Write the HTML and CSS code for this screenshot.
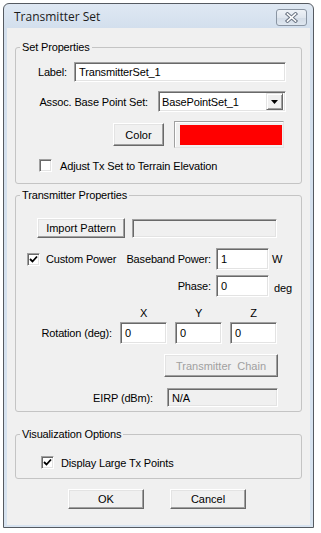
FILE: index.html
```html
<!DOCTYPE html>
<html lang="en">
<head>
    <meta charset="UTF-8">
    <title>Transmitter Set</title>
    <link rel="stylesheet" href="styles.css">
</head>
<body>
    <div class="window">
        <div class="titlebar">
            <span class="title">Transmitter Set</span>
            <div class="close-btn">
                <svg width="13" height="11" viewBox="0 0 13 11">
                    <path d="M2.5 2 L10.5 9 M10.5 2 L2.5 9" stroke="#6b7584" stroke-width="3.6" stroke-linecap="square"/>
                    <path d="M2.5 2 L10.5 9 M10.5 2 L2.5 9" stroke="#fff" stroke-width="1.6" stroke-linecap="square"/>
                </svg>
            </div>
        </div>

        <div class="client">
            <fieldset class="group">
                <legend>Set Properties</legend>
                <div class="set-body">
                    <div class="row row-end">
                        <span class="lbl">Label:</span>
                        <div class="edit edit-label">TransmitterSet_1</div>
                    </div>
                    <div class="row row-end row-assoc">
                        <span class="lbl lbl-assoc">Assoc. Base Point Set:</span>
                        <div class="edit combo">
                            <span>BasePointSet_1</span>
                            <div class="combo-btn">
                                <svg width="7" height="4" viewBox="0 0 7 4"><path d="M0 0 H7 L3.5 4 Z" fill="#000"/></svg>
                            </div>
                        </div>
                    </div>
                    <div class="row row-end row-color">
                        <button type="button" class="btn btn-color">Color</button>
                        <div class="swatch"><div class="swatch-fill"></div></div>
                    </div>
                    <div class="row check-row terrain-row">
                        <span class="checkbox"></span>
                        <span>Adjust Tx Set to Terrain Elevation</span>
                    </div>
                </div>
            </fieldset>

            <fieldset class="group group-tx">
                <legend>Transmitter Properties</legend>
                <div class="tx-body">
                    <div class="row import-row">
                        <button type="button" class="btn btn-import">Import Pattern</button>
                        <div class="edit edit-disabled edit-pattern"></div>
                    </div>
                    <div class="row power-row">
                        <div class="power-lead">
                            <div class="check-row">
                                <span class="checkbox checked">
                                    <svg width="9" height="9" viewBox="0 0 9 9"><path d="M1 4 L3.5 6.5 L8 1.5" stroke="#000" stroke-width="1.8" fill="none"/></svg>
                                </span>
                                <span class="custom-power">Custom Power</span>
                            </div>
                            <span>Baseband Power:</span>
                        </div>
                        <div class="edit edit-num">1</div>
                        <span class="unit">W</span>
                    </div>
                    <div class="row power-row phase-row">
                        <div class="power-lead lead-right">
                            <span>Phase:</span>
                        </div>
                        <div class="edit edit-num">0</div>
                        <span class="unit unit-deg">deg</span>
                    </div>
                    <div class="rotation">
                        <span></span>
                        <span class="axis">X</span>
                        <span class="axis">Y</span>
                        <span class="axis">Z</span>
                        <span class="rot-label">Rotation (deg):</span>
                        <div class="edit edit-rot">0</div>
                        <div class="edit edit-rot">0</div>
                        <div class="edit edit-rot">0</div>
                    </div>
                    <button type="button" class="btn btn-chain" disabled>Transmitter&nbsp; Chain</button>
                    <div class="row eirp-row">
                        <span class="eirp-label">EIRP (dBm):</span>
                        <div class="edit edit-disabled edit-eirp">N/A</div>
                    </div>
                </div>
            </fieldset>

            <fieldset class="group group-vis">
                <legend>Visualization Options</legend>
                <div class="vis-body">
                    <div class="check-row">
                        <span class="checkbox checked">
                            <svg width="9" height="9" viewBox="0 0 9 9"><path d="M1 4 L3.5 6.5 L8 1.5" stroke="#000" stroke-width="1.8" fill="none"/></svg>
                        </span>
                        <span>Display Large Tx Points</span>
                    </div>
                </div>
            </fieldset>

            <div class="actions">
                <button type="button" class="btn btn-action">OK</button>
                <button type="button" class="btn btn-action">Cancel</button>
            </div>
        </div>
    </div>
</body>
</html>
```

FILE: styles.css
```css
* {
    box-sizing: border-box;
}

body {
    margin: 0;
    background: #fff;
    font-family: "Liberation Sans", Arial, sans-serif;
    font-size: 11px;
    letter-spacing: -0.15px;
    color: #000;
}

.window {
    margin: 3px 0 0 3px;
    width: 311px;
    height: 525px;
    border: 1px solid #555a61;
    border-radius: 6px 6px 0 0;
    background: linear-gradient(#dfe8f3, #d3dfed 24px, #d7e3f0);
    padding: 0 3px 2px 3px;
    display: flex;
    flex-direction: column;
}

.titlebar {
    height: 24px;
    display: flex;
    align-items: flex-start;
}

.title {
    font-family: "Open Sans", "Liberation Sans", sans-serif;
    font-size: 12px;
    line-height: 16px;
    letter-spacing: 0;
    margin: 5px 0 0 7px;
    color: #1b1b1b;
}

.close-btn {
    margin: 5px 3px 0 auto;
    width: 31px;
    height: 17px;
    border: 1px solid #8a95a3;
    border-radius: 3px;
    background: linear-gradient(#eef2f7, #dfe6ee 50%, #d2dbe6 51%, #dfe7f0);
    display: flex;
    align-items: center;
    justify-content: center;
}

.client {
    flex: 1;
    background: #f0f0f0;
    padding: 13px 8px 0 8px;
}

.group {
    margin: 0;
    padding: 0;
    min-width: 0;
    border: 1px solid #c4c4c4;
    border-radius: 3px;
}

.group legend {
    padding: 0 2px;
    margin-left: 4px;
    line-height: 13px;
}

.row {
    display: flex;
    align-items: center;
}

.row-end {
    justify-content: flex-end;
}

.lbl {
    margin-right: 7px;
}

.lbl-assoc {
    margin-right: 10px;
}

/* sunken edit box */
.edit {
    background: #fff;
    border: 1px solid;
    border-color: #a0a0a0 #fff #fff #a0a0a0;
    box-shadow: inset 1px 1px #696969, inset -1px -1px #e3e3e3;
    padding: 0 4px;
    display: flex;
    align-items: center;
    white-space: nowrap;
}

.edit-disabled {
    background: #f0f0f0;
}

.btn {
    font: inherit;
    color: #000;
    background: #f0f0f0;
    border: 1px solid;
    border-color: #fff #696969 #696969 #fff;
    box-shadow: inset -1px -1px #a0a0a0, inset 1px 1px #e3e3e3;
    padding: 0;
    margin: 0;
}

.btn:disabled {
    color: #a0a0a0;
}

.checkbox {
    width: 13px;
    height: 13px;
    flex: none;
    background: #fff;
    border: 1px solid;
    border-color: #a0a0a0 #fff #fff #a0a0a0;
    box-shadow: inset 1px 1px #696969, inset -1px -1px #e3e3e3;
    display: flex;
    align-items: center;
    justify-content: center;
}

.check-row {
    display: flex;
    align-items: center;
}

/* Set Properties */
.set-body {
    padding: 8px 15px 11px 0;
}

.edit-label {
    width: 212px;
    height: 20px;
    padding-left: 4px;
}

.row-assoc {
    margin-top: 9px;
}

.combo {
    width: 128px;
    height: 21px;
    padding: 0 2px 0 3px;
    justify-content: space-between;
}

.combo-btn {
    width: 17px;
    height: 17px;
    background: #f0f0f0;
    border: 1px solid;
    border-color: #e3e3e3 #696969 #696969 #e3e3e3;
    box-shadow: inset 1px 1px #fff, inset -1px -1px #a0a0a0;
    display: flex;
    align-items: center;
    justify-content: center;
}

.row-color {
    margin-top: 9px;
    margin-right: 2px;
}

.btn-color {
    width: 51px;
    height: 23px;
    margin-right: 10px;
}

.swatch {
    width: 110px;
    height: 27px;
    border: 1px solid;
    border-color: #a0a0a0 #e3e3e3 #e3e3e3 #a0a0a0;
    box-shadow: inset 1px 1px #fff;
    padding: 3px 1px 2px 5px;
}

.swatch-fill {
    height: 100%;
    background: #ff0000;
}

.terrain-row {
    margin-top: 11px;
    padding-left: 23px;
}

.terrain-row .checkbox {
    margin-right: 8px;
}

/* Transmitter Properties */
.group-tx {
    margin-top: 5px;
}

.tx-body {
    padding: 16px 0 4px 0;
}

.import-row {
    margin-left: 21px;
}

.btn-import {
    width: 88px;
    height: 20px;
    margin-right: 7px;
}

.edit-pattern {
    width: 145px;
    height: 19px;
}

.power-row {
    margin-top: 10px;
}

.phase-row {
    margin-top: 5px;
}

.power-lead {
    width: 195px;
    padding-left: 11px;
    display: flex;
    align-items: center;
    justify-content: space-between;
}

.lead-right {
    justify-content: flex-end;
}

.power-lead .checkbox {
    margin-right: 6px;
}

.custom-power {
    margin-top: -1px;
}

.edit-num {
    width: 53px;
    height: 22px;
    margin-left: 5px;
}

.unit {
    margin-left: 3px;
}

.unit-deg {
    margin-left: 5px;
    margin-top: 4px;
}

.rotation {
    margin-top: 9px;
    display: grid;
    grid-template-columns: 96px 47px 47px 47px;
    grid-template-rows: 13px 22px;
    column-gap: 8px;
    row-gap: 3px;
    align-items: center;
}

.axis {
    text-align: center;
}

.rot-label {
    text-align: right;
    padding-right: 0;
}

.edit-rot {
    height: 22px;
}

.btn-chain {
    display: block;
    margin: 10px 0 0 148px;
    width: 114px;
    height: 23px;
}

.eirp-row {
    margin-top: 11px;
}

.eirp-label {
    width: 137px;
    text-align: right;
    margin-right: 14px;
}

.edit-eirp {
    width: 111px;
    height: 19px;
}

/* Visualization Options */
.group-vis {
    margin-top: 16px;
}

.vis-body {
    padding: 15px 0 9px 25px;
}

.vis-body .checkbox {
    margin-right: 7px;
}

.actions {
    margin: 10px 0 0 53px;
    display: flex;
    gap: 26px;
}

.btn-action {
    width: 76px;
    height: 20px;
}
```
